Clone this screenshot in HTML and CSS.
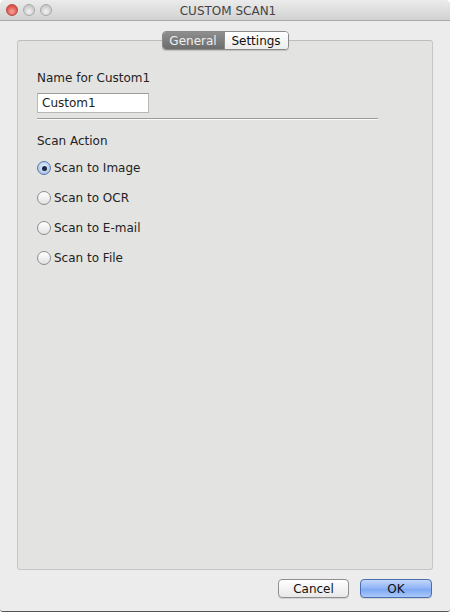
FILE: index.html
```html
<!DOCTYPE html>
<html lang="en">
<head>
    <meta charset="UTF-8">
    <title>CUSTOM SCAN1</title>
    <link rel="stylesheet" href="styles.css">
</head>
<body>
    <div class="window">
        <header class="titlebar">
            <div class="lights">
                <span class="light close"></span>
                <span class="light"></span>
                <span class="light"></span>
            </div>
            <div class="title">CUSTOM SCAN1</div>
        </header>

        <div class="tabbox">
            <div class="tabs">
                <span class="tab active">General</span>
                <span class="tab">Settings</span>
            </div>
            <div class="panel">
                <div class="field-label">Name for Custom1</div>
                <div class="textfield">Custom1</div>
                <div class="separator"></div>

                <div class="group-label">Scan Action</div>
                <ul class="radios">
                    <li class="radio checked"><span class="dot"></span>Scan to Image</li>
                    <li class="radio"><span class="dot"></span>Scan to OCR</li>
                    <li class="radio"><span class="dot"></span>Scan to E-mail</li>
                    <li class="radio"><span class="dot"></span>Scan to File</li>
                </ul>
            </div>
        </div>

        <div class="buttons">
            <button class="btn">Cancel</button>
            <button class="btn default">OK</button>
        </div>
    </div>
</body>
</html>
```

FILE: styles.css
```css
* {
    box-sizing: border-box;
    margin: 0;
    padding: 0;
}
body {
    font-family: "DejaVu Sans", Arial, sans-serif;
    font-size: 11.5px;
    color: #222;
    background-color: #fff;
}
.window {
    width: 450px;
    height: 612px;
    background-color: #ececec;
    border-bottom: 1px solid #555;
    border-radius: 5px 5px 3px 3px;
    display: flex;
    flex-direction: column;
}
.titlebar {
    height: 21px;
    display: flex;
    align-items: center;
    background: linear-gradient(#ebebeb, #d2d2d2);
    border-bottom: 1px solid #a8a8a8;
    border-radius: 5px 5px 0 0;
}
.lights {
    display: flex;
    gap: 5px;
    padding-left: 6px;
    width: 0;
}
.light {
    flex: none;
    width: 12px;
    height: 12px;
    border-radius: 50%;
    border: 1px solid #a9a9a9;
    background: radial-gradient(circle at 50% 65%, #f4f4f4, #c9c9c9 70%);
}
.light.close {
    border-color: #b24a44;
    background: radial-gradient(circle at 50% 65%, #f6a49c, #dc4e43 70%);
}
.title {
    flex: 1;
    text-align: center;
    font-size: 12px;
    color: #444;
    padding-top: 1px;
}
.tabbox {
    margin: 18px 17px 0 17px;
    height: 531px;
    display: flex;
    flex-direction: column;
    align-items: center;
}
.tabs {
    display: flex;
    height: 19px;
    border: 1px solid #8a8a8a;
    border-radius: 4px;
    background: #fff;
    margin-top: -8px;
    margin-bottom: -10px;
    position: relative;
    z-index: 1;
    box-shadow: 0 1px 1px rgba(0, 0, 0, 0.15);
    overflow: hidden;
}
.tab {
    display: flex;
    align-items: center;
    justify-content: center;
    font-size: 12px;
    color: #111;
    background: linear-gradient(#ffffff, #ececec);
}
.tab:first-child {
    width: 61px;
}
.tab:last-child {
    width: 64px;
    border-left: 1px solid #8a8a8a;
}
.tab.active {
    color: #eee;
    background: linear-gradient(#8e8e8e, #6c6c6c);
}
.panel {
    width: 100%;
    flex: 1;
    background-color: #e3e4e2;
    border: 1px solid #c6c6c6;
    border-top-color: #bdbdbd;
    border-radius: 3px;
    padding: 30px 0 0 19px;
}
.field-label {
    font-size: 12px;
    color: #222;
    height: 16px;
}
.textfield {
    margin-top: 6px;
    width: 112px;
    height: 20px;
    background: #fff;
    border: 1px solid #b8b8b8;
    border-top-color: #9c9c9c;
    font-size: 12px;
    padding: 2px 0 0 4px;
}
.separator {
    margin-top: 5px;
    width: 341px;
    height: 2px;
    border-top: 1px solid #9c9c9c;
    border-bottom: 1px solid #fafafa;
}
.group-label {
    margin-top: 14px;
    font-size: 12px;
    height: 16px;
}
.radios {
    list-style: none;
    margin-top: 10px;
    display: flex;
    flex-direction: column;
    gap: 14px;
}
.radio {
    display: flex;
    align-items: center;
    height: 16px;
    font-size: 12px;
}
.dot {
    width: 14px;
    height: 14px;
    border-radius: 50%;
    border: 1px solid #8d8d8d;
    background: linear-gradient(#ffffff, #e2e2e2);
    margin-right: 3px;
    display: flex;
    align-items: center;
    justify-content: center;
}
.radio.checked .dot {
    border-color: #5b77a8;
    background: radial-gradient(circle at 50% 40%, #e9f1fc, #a9c3ea 75%);
}
.radio.checked .dot::after {
    content: "";
    width: 5px;
    height: 5px;
    border-radius: 50%;
    background: #1c2a44;
}
.buttons {
    display: flex;
    justify-content: flex-end;
    gap: 11px;
    padding: 9px 18px 0 0;
}
.btn {
    font-family: "DejaVu Sans", Arial, sans-serif;
    font-size: 12px;
    color: #111;
    width: 71px;
    height: 19px;
    border: 1px solid #8f8f8f;
    border-radius: 4px;
    background: linear-gradient(#ffffff, #e8e8e8);
    box-shadow: 0 1px 0 rgba(0, 0, 0, 0.1);
}
.btn.default {
    width: 72px;
    border-color: #4a6fb0;
    background: linear-gradient(#c4d7fa, #8db3f5 50%, #7ba6f3 51%, #a9c7fa);
}
```
